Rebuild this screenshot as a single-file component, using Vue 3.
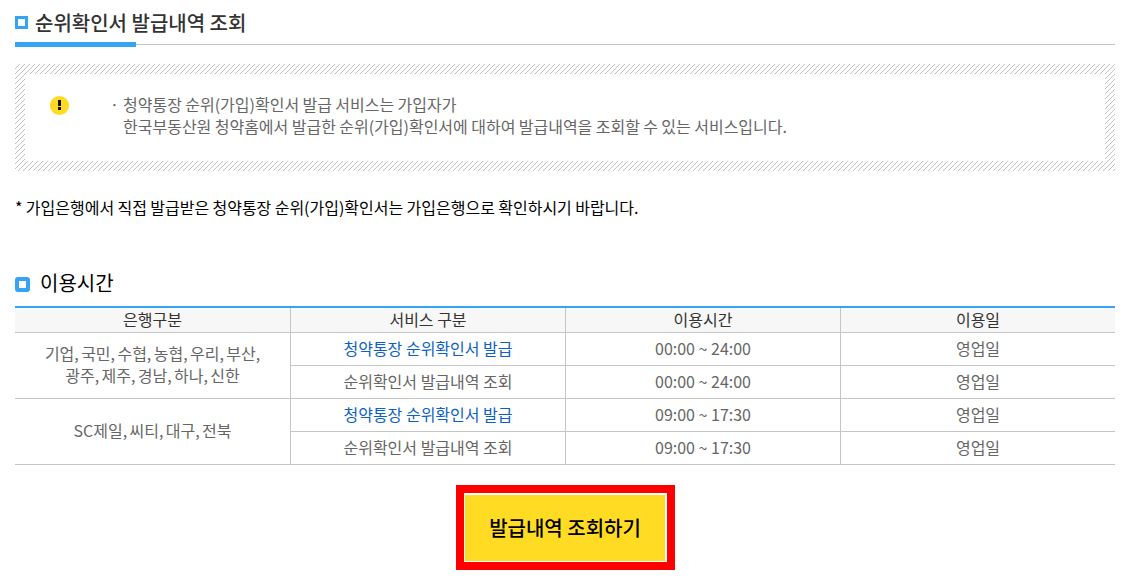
<template>
  <main class="page">
    <h1 class="page-title">
      <span class="square"></span>
      <span class="label">순위확인서 발급내역 조회</span>
    </h1>

    <section class="notice">
      <svg class="hatch" width="1100" height="107" shape-rendering="crispEdges" aria-hidden="true">
        <defs>
          <pattern id="stripe" width="5" height="5" patternUnits="userSpaceOnUse">
            <rect v-for="n in 5" :key="n" :x="5 - n" :y="n - 1" width="1" height="1" fill="#c3c3c3" />
          </pattern>
        </defs>
        <path d="M0 0H1100V107H0ZM10 10V97H1090V10Z" fill="url(#stripe)" fill-rule="evenodd" />
      </svg>
      <svg class="notice-icon" width="20" height="20" viewBox="0 0 20 20" aria-hidden="true">
        <circle cx="9.5" cy="9.5" r="9.6" fill="#ffdc23" />
        <path d="M8 4H11V10H8ZM8 11H11V14H8Z" fill="#111" />
      </svg>
      <span class="dot">·</span>
      <p>
        청약통장 순위(가입)확인서 발급 서비스는 가입자가<br />
        한국부동산원 청약홈에서 발급한 순위(가입)확인서에 대하여 발급내역을 조회할 수 있는 서비스입니다.
      </p>
    </section>

    <p class="remark">* 가입은행에서 직접 발급받은 청약통장 순위(가입)확인서는 가입은행으로 확인하시기 바랍니다.</p>

    <h2 class="sub-title">
      <span class="round-square"></span>
      이용시간
    </h2>

    <table class="time-table">
      <thead>
        <tr>
          <th v-for="name in headers" :key="name">{{ name }}</th>
        </tr>
      </thead>
      <tbody>
        <template v-for="group in groups" :key="group.time">
          <tr v-for="(service, index) in services" :key="service">
            <td v-if="index === 0" class="banks" :rowspan="services.length">
              <div v-for="line in group.banks" :key="line">{{ line }}</div>
            </td>
            <td class="split" :class="{ link: index === 0 }">{{ service }}</td>
            <td class="split">{{ group.time }}</td>
            <td class="split">영업일</td>
          </tr>
        </template>
      </tbody>
    </table>

    <div class="button-frame">
      <button type="button" class="search-btn">발급내역 조회하기</button>
    </div>
  </main>
</template>

<script setup>
const headers = ['은행구분', '서비스 구분', '이용시간', '이용일']
const services = ['청약통장 순위확인서 발급', '순위확인서 발급내역 조회']

const groups = [
  {
    banks: ['기업, 국민, 수협, 농협, 우리, 부산,', '광주, 제주, 경남, 하나, 신한'],
    time: '00:00 ~ 24:00'
  },
  {
    banks: ['SC제일, 씨티, 대구, 전북'],
    time: '09:00 ~ 17:30'
  }
]
</script>

<style>
body {
  background: #fff;
}
</style>

<style scoped>
.page {
  box-sizing: border-box;
  width: 1129px;
  height: 585px;
  padding: 0 14px 0 15px;
  overflow: hidden;
  font-family: "Noto Sans CJK KR", sans-serif;
  font-size: 16px;
  line-height: 22px;
  color: #666;
}

/* 제목 */
.page-title {
  display: flex;
  align-items: center;
  box-sizing: border-box;
  height: 47px;
  margin: 0;
  padding-bottom: 3px;
  background:
    linear-gradient(#35a4f4, #35a4f4) 0 42px / 121px 5px no-repeat,
    linear-gradient(#c5c5c5, #c5c5c5) 0 44px / 100% 1px no-repeat;
  color: #333;
  font-size: 20px;
  font-weight: 500;
}

.square {
  box-sizing: border-box;
  width: 13px;
  height: 13px;
  margin-right: 7px;
  border: 3px solid #35a4f4;
}

.label {
  padding-top: 1px;
}

/* 안내 박스 */
.notice {
  position: relative;
  display: flex;
  align-items: flex-start;
  box-sizing: border-box;
  height: 107px;
  margin-top: 17px;
  padding: 29px 35px;
}

.hatch {
  position: absolute;
  top: 0;
  left: 0;
}

.notice-icon {
  margin-top: 3px;
  overflow: visible;
}

.dot {
  width: 13px;
  margin-left: 40px;
}

.notice p {
  margin: 0;
  white-space: nowrap;
  word-spacing: -0.2px;
}

.remark {
  margin: 25px 0 0;
  color: #000;
  word-spacing: -0.25px;
}

/* 이용시간 */
.sub-title {
  display: flex;
  align-items: center;
  height: 30px;
  margin: 50px 0 0;
  color: #000;
  font-size: 20px;
  font-weight: 400;
}

.round-square {
  box-sizing: border-box;
  width: 15px;
  height: 15px;
  margin: 3px 10px 0 0;
  border: 4px solid #35a4f4;
  border-radius: 3px;
}

.time-table {
  width: 100%;
  margin-top: 8px;
  border-top: 2px solid #35a4f4;
  border-spacing: 0;
  table-layout: fixed;
  text-align: center;
}

.time-table th,
.time-table td {
  box-sizing: border-box;
  height: 33px;
  padding: 0 0 2px;
  border-bottom: 1px solid #c5c5c5;
}

.time-table th {
  height: 25px;
  background: #f7f7f7;
  color: #333;
  font-weight: 400;
}

.time-table .banks {
  padding-bottom: 4px;
  word-spacing: -1.2px;
}

.time-table th + th,
.time-table .split {
  border-left: 1px solid #c5c5c5;
}

.time-table .link {
  color: #0b61c4;
}

/* 버튼 */
.button-frame {
  box-sizing: border-box;
  width: 219px;
  height: 85px;
  margin: 20px 0 0 441px;
  padding: 2px 2px 1px 1px;
  border: 8px solid #f00;
}

.search-btn {
  width: 100%;
  height: 100%;
  padding: 0 0 1px;
  border: 0;
  background: #ffdc23;
  color: #000;
  font-family: inherit;
  font-size: 20px;
  font-weight: 500;
  cursor: pointer;
}
</style>
